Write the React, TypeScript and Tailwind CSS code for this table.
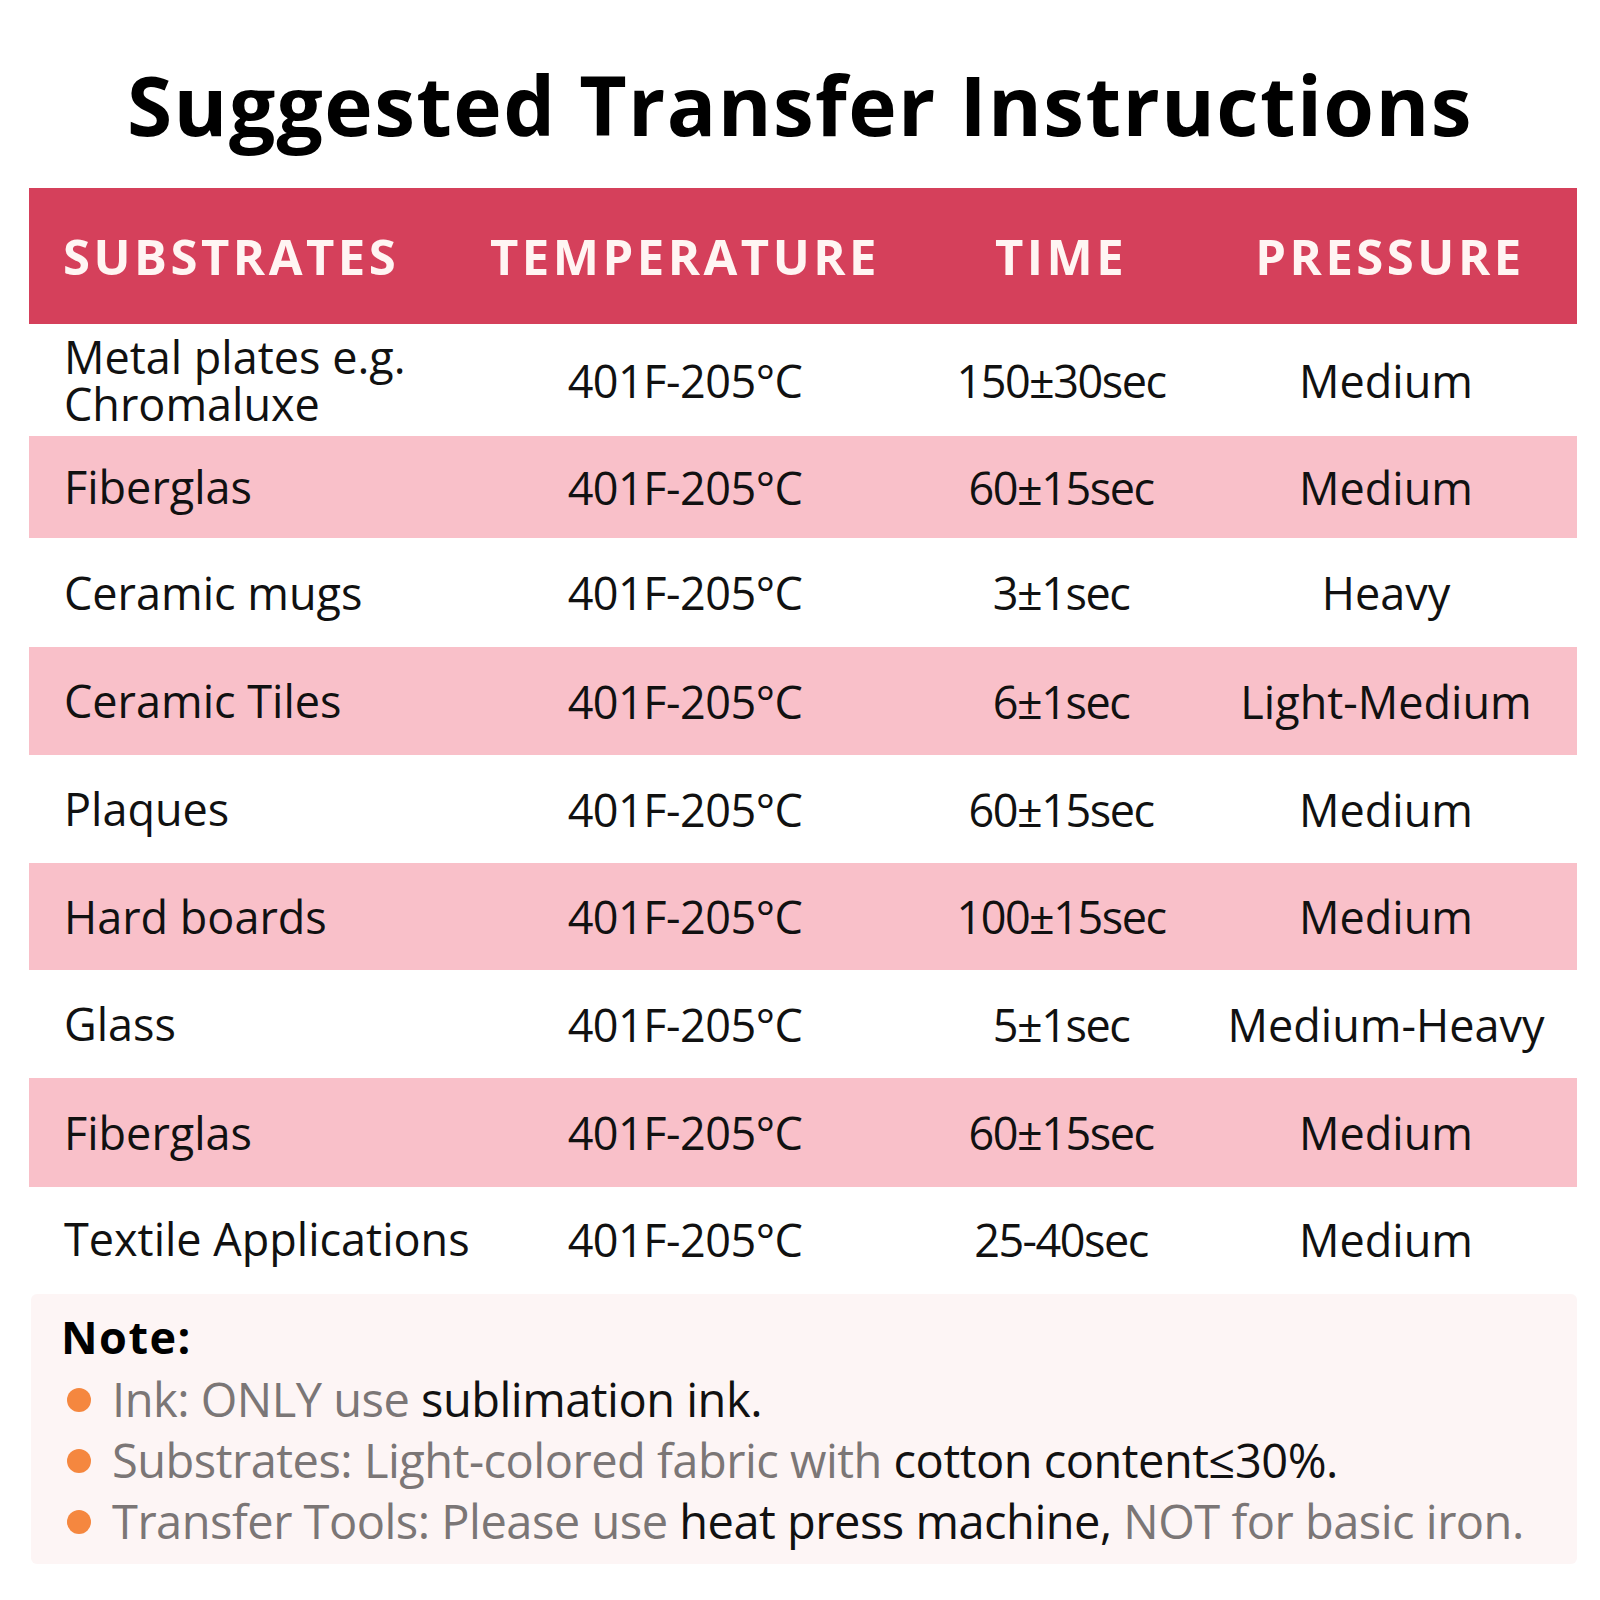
import React from "react";

const rows: { s: string[]; t: string; time: string; p: string; pink: boolean; h: string }[] = [
  { s: ["Metal plates e.g.", "Chromaluxe"], t: "401F-205°C", time: "150±30sec", p: "Medium", pink: false, h: "h-[112px]" },
  { s: ["Fiberglas"], t: "401F-205°C", time: "60±15sec", p: "Medium", pink: true, h: "h-[102px]" },
  { s: ["Ceramic mugs"], t: "401F-205°C", time: "3±1sec", p: "Heavy", pink: false, h: "h-[109px]" },
  { s: ["Ceramic Tiles"], t: "401F-205°C", time: "6±1sec", p: "Light-Medium", pink: true, h: "h-[108px]" },
  { s: ["Plaques"], t: "401F-205°C", time: "60±15sec", p: "Medium", pink: false, h: "h-[108px]" },
  { s: ["Hard boards"], t: "401F-205°C", time: "100±15sec", p: "Medium", pink: true, h: "h-[107px]" },
  { s: ["Glass"], t: "401F-205°C", time: "5±1sec", p: "Medium-Heavy", pink: false, h: "h-[108px]" },
  { s: ["Fiberglas"], t: "401F-205°C", time: "60±15sec", p: "Medium", pink: true, h: "h-[109px]" },
  { s: ["Textile Applications"], t: "401F-205°C", time: "25-40sec", p: "Medium", pink: false, h: "h-[104px]" },
];

const grid = "grid grid-cols-[461px_390px_362px_296px] items-center";
const cell = "flex justify-center whitespace-nowrap";

export default function App() {
  return (
    <div
      className="w-[1600px] h-[1600px] bg-white text-black"
      style={{ fontFamily: '"Open Sans", "Noto Sans", sans-serif' }}
    >
      <div className="pt-[63px] h-[188px] flex justify-center">
        <h1 className="text-[82px] leading-none font-bold tracking-[1.4px] whitespace-nowrap">
          Suggested Transfer Instructions
        </h1>
      </div>
      <div className="mx-[29px] w-[1548px]">
        <div className={`${grid} h-[136px] bg-[#d5405b] text-[#fff5f3] font-bold text-[49px] leading-none tracking-[3.5px]`}>
          <div className="pl-[34px] whitespace-nowrap">SUBSTRATES</div>
          <div className={cell}>TEMPERATURE</div>
          <div className={cell}>TIME</div>
          <div className={cell}>PRESSURE</div>
        </div>
        {rows.map((r, i) => (
          <div
            key={i}
            className={`${grid} ${r.h} ${r.pink ? "bg-[#f9c0c9]" : "bg-white"} text-[45px] leading-none text-[#111]`}
          >
            <div className="pl-[35px] whitespace-nowrap flex flex-col gap-[1px]">
              {r.s.map((l, j) => (
                <div key={j} className="leading-[46px]">{l}</div>
              ))}
            </div>
            <div className={`${cell} tracking-[-0.5px]`}>{r.t}</div>
            <div className={`${cell} tracking-[-1.5px]`}>{r.time}</div>
            <div className={`${cell} -ml-[8px]`}>{r.p}</div>
          </div>
        ))}
      </div>
      <div className="mx-[31px] mt-[3px] w-[1546px] h-[270px] bg-[#fdf5f5] rounded-[6px] pl-[30px] pt-[11px]">
        <div className="text-[45px] font-bold leading-[64px] tracking-[1.5px]">Note:</div>
        <div className="flex flex-col text-[47px] leading-[61px] tracking-[-0.5px]">
          {[
            [
              ["Ink: ONLY use ", false],
              ["sublimation ink.", true],
            ],
            [
              ["Substrates: Light-colored fabric with ", false],
              ["cotton content≤30%.", true],
            ],
            [
              ["Transfer Tools: Please use ", false],
              ["heat press machine,", true],
              [" NOT for basic iron.", false],
            ],
          ].map((line, i) => (
            <div key={i} className="flex items-center whitespace-nowrap">
              <span className="w-[24px] h-[24px] rounded-full bg-[#f5873f] ml-[6px] mr-[21px] shrink-0" />
              <span>
                {(line as [string, boolean][]).map(([t, b], j) => (
                  <span key={j} className={b ? "text-[#111]" : "text-[#7b7676]"}>
                    {t}
                  </span>
                ))}
              </span>
            </div>
          ))}
        </div>
      </div>
    </div>
  );
}
